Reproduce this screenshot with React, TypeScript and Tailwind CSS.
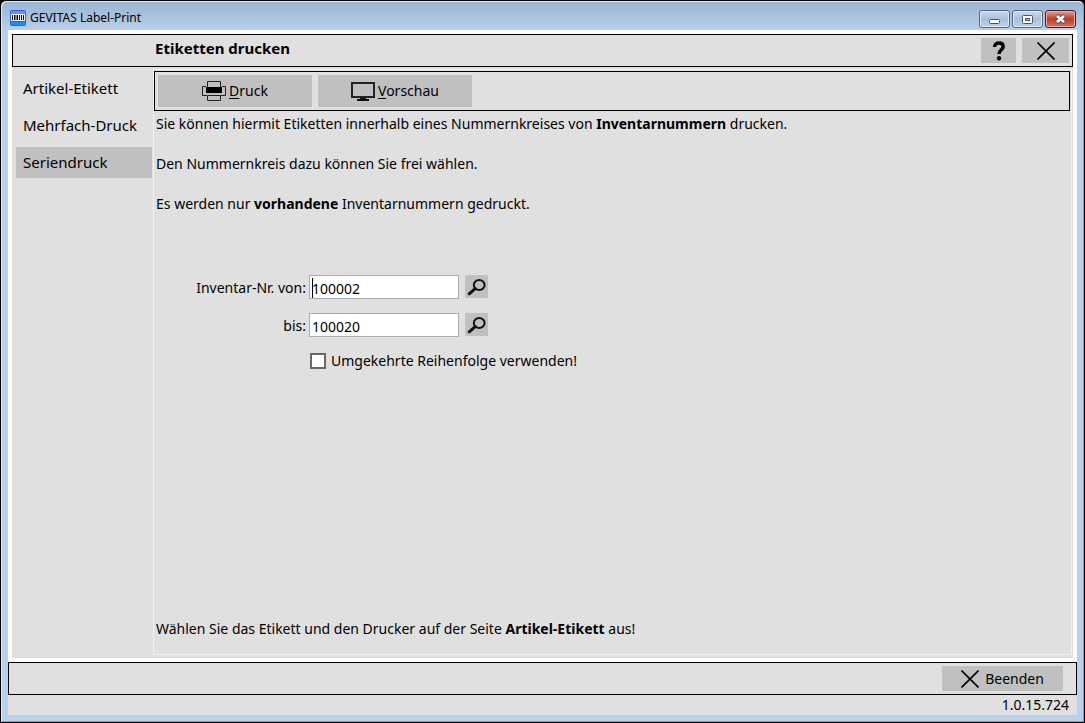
import { useState } from "react";

const tabs = ["Artikel-Etikett", "Mehrfach-Druck", "Seriendruck"];

function AppIcon() {
  return (
    <svg width="16" height="16" viewBox="0 0 16 16">
      <rect x="0" y="0" width="16" height="16" rx="2" fill="#2f62d8" />
      <rect x="1" y="1" width="14" height="3" fill="#6d90ee" />
      <rect x="1" y="4" width="14" height="7" fill="#f4f6fb" />
      <path d="M2.5 5v5M4.5 5v5M7.5 5v5M9.5 5v5M11.5 5v5M13.5 5v5" stroke="#111" strokeWidth="1" />
      <path d="M6 5v5" stroke="#111" strokeWidth="1" />
      <rect x="1" y="12" width="14" height="3" fill="#1d8df5" />
    </svg>
  );
}

function PrinterIcon() {
  return (
    <svg width="24" height="20" viewBox="0 0 24 20" fill="none" stroke="#222" strokeWidth="1">
      <path d="M5.5 7V0.5H18.5V7" />
      <path d="M4 5.5H0.5V14.5H5M20 5.5H23.5V14.5H19" />
      <rect x="4" y="6" width="16" height="6" fill="#000" stroke="none" />
      <path d="M5.5 14.5H18.5V19.5H5.5Z" />
    </svg>
  );
}

function MonitorIcon() {
  return (
    <svg width="24" height="20" viewBox="0 0 24 20">
      <rect x="1" y="2" width="22" height="14" fill="none" stroke="#222" strokeWidth="2" />
      <path d="M9 17H15V18H18V20H6V18H9Z" fill="#111" />
    </svg>
  );
}

function CrossIcon() {
  return (
    <svg width="18" height="18" viewBox="0 0 18 18">
      <path d="M0.5 0.5L17.5 17.5M17.5 0.5L0.5 17.5" stroke="#000" strokeWidth="1.6" />
    </svg>
  );
}

function HelpIcon() {
  return (
    <svg width="14" height="20" viewBox="0 0 14 20">
      <path d="M2.6 6C2.6 3.2 4.5 2 6.9 2C9.5 2 11.2 3.4 11.2 5.6C11.2 8.9 7 8.7 7 13" fill="none" stroke="#000" strokeWidth="3.4" />
      <circle cx="7" cy="17.2" r="2.2" fill="#000" />
    </svg>
  );
}

function SearchIcon() {
  return (
    <svg width="19" height="18" viewBox="0 0 19 18" fill="none" stroke="#111">
      <ellipse cx="12.2" cy="7" rx="5.4" ry="5" strokeWidth="2" />
      <path d="M8.2 10.6L2.2 15.8" strokeWidth="3" strokeLinecap="round" />
    </svg>
  );
}

function TitleBar() {
  const box = "flex h-[18px] w-[31px] items-center justify-center rounded-[3px] border border-[#52677f] bg-linear-to-b from-[#cddcec] via-[#a9c0da] to-[#bcd3ea] shadow-[inset_0_0_0_1px_#dfeaf5]";
  return (
    <header className="flex h-7 shrink-0 items-end pl-2 pr-[7px] pb-0.5">
      <div className="flex flex-1 items-center gap-1 pb-0.5">
        <AppIcon />
        <h1 className="text-xs">GEVITAS Label-Print</h1>
      </div>
      <div className="flex gap-0.5">
        <button className={box} aria-label="Minimieren">
          <svg width="11" height="9" viewBox="0 0 11 9">
            <rect x="0.5" y="4.5" width="10" height="4" rx="1" fill="#fff" stroke="#4c5468" />
          </svg>
        </button>
        <button className={box} aria-label="Maximieren">
          <svg width="11" height="9" viewBox="0 0 11 9">
            <rect x="0.5" y="0.5" width="10" height="8" rx="1" fill="#fff" stroke="#4c5468" />
            <rect x="3.5" y="3.5" width="4" height="2" fill="#a9c0da" stroke="#4c5468" />
          </svg>
        </button>
        <button
          className="flex h-[18px] w-[31px] items-center justify-center rounded-[3px] border border-[#4b1a22] bg-linear-to-b from-[#e0a199] via-[#bf3a22] to-[#d2705b] shadow-[inset_0_0_0_1px_#e6b0a6]"
          aria-label="Schließen"
        >
          <svg width="13" height="10" viewBox="0 0 13 10">
            <path d="M2.5 1.5L10.5 8.5M10.5 1.5L2.5 8.5" stroke="#4c5468" strokeWidth="4.4" />
            <path d="M3 2L10 8M10 2L3 8" stroke="#fff" strokeWidth="2.6" />
          </svg>
        </button>
      </div>
    </header>
  );
}

function NumberRow({ id, label, value, caret }: { id: string; label: string; value: string; caret?: boolean }) {
  return (
    <div className="flex items-start">
      <label htmlFor={id} className="w-[153px] pr-[3px] text-right leading-[26px]">
        {label}
      </label>
      <div className="relative">
        <input
          id={id}
          defaultValue={value}
          className="h-6 w-[150px] border border-[#abadb3] bg-white px-0.5 pt-0.5 outline-none"
        />
        {caret && <span className="absolute left-[3px] top-[3px] h-5 w-px bg-black" />}
      </div>
      <button className="ml-1.5 flex h-[23px] w-[23px] items-center justify-center bg-[#c0c0c0]" aria-label="Suchen">
        <SearchIcon />
      </button>
    </div>
  );
}

export default function App() {
  const [active, setActive] = useState("Seriendruck");

  return (
    <div className="h-screen bg-black font-['Noto_Sans',sans-serif] text-sm text-black">
      <div className="flex h-full flex-col rounded-t-md border border-black bg-linear-to-b from-[#99b4d1] to-[#b9d1ea] to-[30px]">
        <div className="flex min-h-0 flex-1 flex-col rounded-t-md border border-t-[#e6eef7] border-r-[#35c3d8] border-b-[#35c3d8] border-l-[#e6eef7]">
          <TitleBar />

          <div className="mx-1.5 mb-1.5 flex min-h-0 flex-1 flex-col bg-[#e0e0e0]">
            <div className="flex min-h-0 flex-1 flex-col bg-white p-1">
              <div className="flex h-[33px] shrink-0 items-center border border-black bg-[#e0e0e0] pr-[3px]">
                <h2 className="flex-1 pb-1 pl-[142px] text-[15px] font-bold">Etiketten drucken</h2>
                <button className="flex h-[25px] w-[35px] items-center justify-center bg-[#c0c0c0]" aria-label="Hilfe">
                  <HelpIcon />
                </button>
                <button className="ml-1.5 flex h-[25px] w-[47px] items-center justify-center bg-[#c0c0c0]" aria-label="Schließen">
                  <CrossIcon />
                </button>
              </div>

              <div className="flex min-h-0 flex-1 bg-[#e0e0e0] pt-0.5">
                <nav className="flex w-[141px] shrink-0 flex-col gap-1.5 pl-1 pr-px pt-1">
                  {tabs.map((tab) => (
                    <button
                      key={tab}
                      onClick={() => setActive(tab)}
                      className={`h-[31px] pl-[7px] text-left text-[15px] ${active === tab ? "bg-[#c0c0c0]" : ""}`}
                    >
                      {tab}
                    </button>
                  ))}
                </nav>

                <main className="mb-[3px] mr-px flex flex-1 flex-col border border-[#f2f2f2] pr-px pt-px">
                  <div className="flex h-10 shrink-0 items-center gap-1.5 border border-black px-[3px]">
                    <button className="flex h-8 w-[154px] items-center justify-center gap-[3px] bg-[#c0c0c0]">
                      <PrinterIcon />
                      <span>
                        <u className="underline-offset-2">D</u>ruck
                      </span>
                    </button>
                    <button className="flex h-8 w-[154px] items-center justify-center gap-[3px] bg-[#c0c0c0]">
                      <MonitorIcon />
                      <span>
                        <u className="underline-offset-2">V</u>orschau
                      </span>
                    </button>
                  </div>

                  <div className="flex flex-1 flex-col px-0.5 pb-[15px] pt-[3px]">
                    <div className="flex flex-col gap-5">
                      <p>
                        Sie können hiermit Etiketten innerhalb eines Nummernkreises von <b>Inventarnummern</b> drucken.
                      </p>
                      <p>Den Nummernkreis dazu können Sie frei wählen.</p>
                      <p>
                        Es werden nur <b>vorhandene</b> Inventarnummern gedruckt.
                      </p>
                    </div>

                    <div className="mt-[61px] flex flex-col gap-3">
                      <NumberRow id="von" label="Inventar-Nr. von:" value="100002" caret />
                      <NumberRow id="bis" label="bis:" value="100020" />
                      <label className="ml-[154px] flex items-center gap-[5px]">
                        <input type="checkbox" className="h-4 w-4 appearance-none border-2 border-[#696969] bg-white checked:bg-[#696969]" />
                        Umgekehrte Reihenfolge verwenden!
                      </label>
                    </div>

                    <p className="mt-auto">
                      Wählen Sie das Etikett und den Drucker auf der Seite <b>Artikel-Etikett</b> aus!
                    </p>
                  </div>
                </main>
              </div>
            </div>

            <footer className="shrink-0">
              <div className="flex h-[33px] items-center justify-end border border-black pr-[13px]">
                <button className="flex h-[25px] w-[121px] items-center justify-center gap-1.5 bg-[#c0c0c0]">
                  <CrossIcon />
                  Beenden
                </button>
              </div>
              <p className="pr-2 text-right">1.0.15.724</p>
            </footer>
          </div>
        </div>
      </div>
    </div>
  );
}
